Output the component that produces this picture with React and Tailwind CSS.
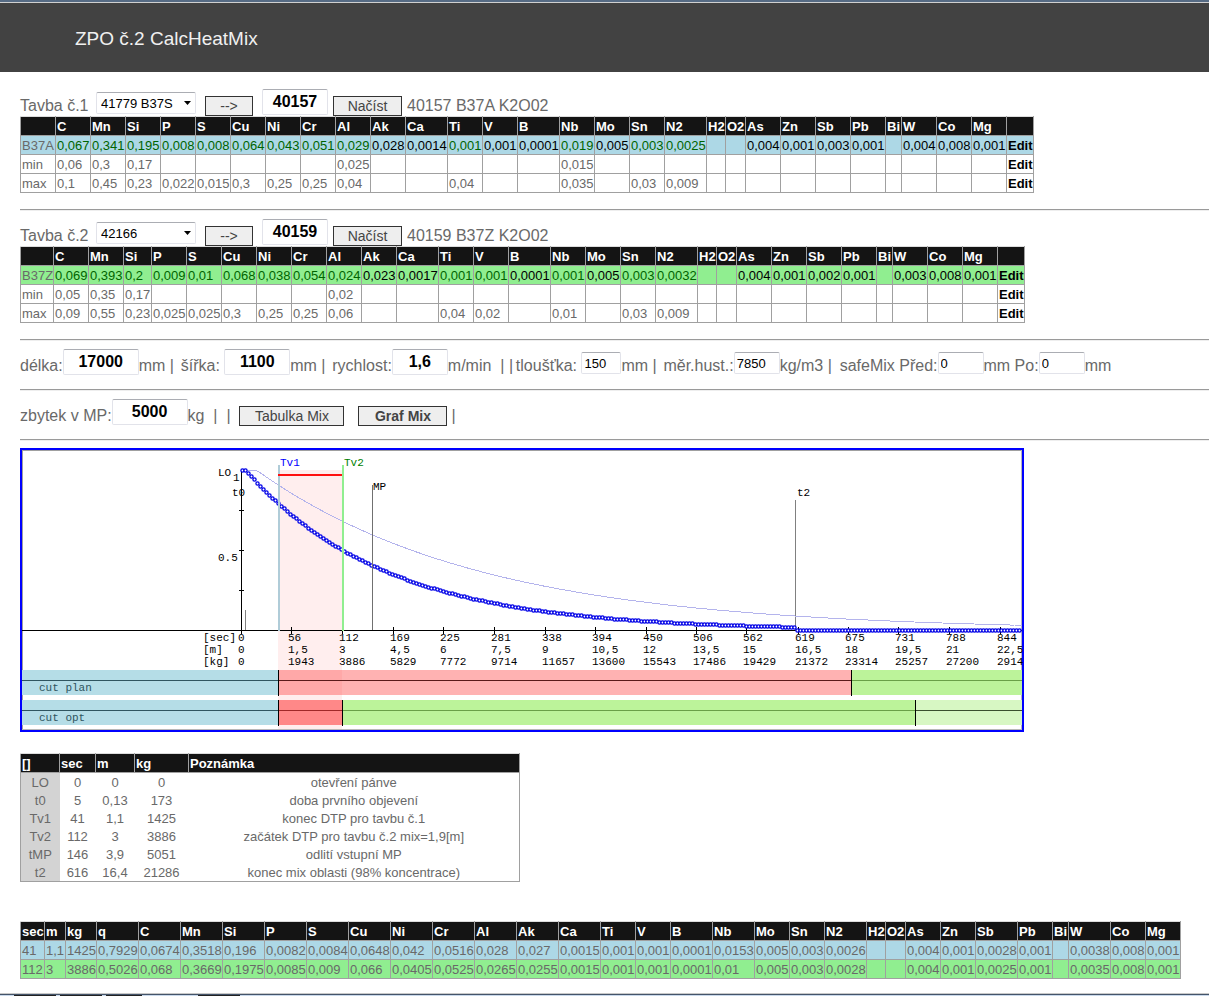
import { useState } from 'react';

const S = 'w-[35px]';
const L = 'w-[42px]';

const ELEMENTS = [
  'C', 'Mn', 'Si', 'P', 'S', 'Cu', 'Ni', 'Cr', 'Al', 'Ak', 'Ca', 'Ti', 'V', 'B', 'Nb', 'Mo',
  'Sn', 'N2', 'H2', 'O2', 'As', 'Zn', 'Sb', 'Pb', 'Bi', 'W', 'Co', 'Mg',
];

const HEATS = [
  {
    id: 1,
    selected: '41779 B37S',
    number: '40157',
    title: '40157 B37A K2O02',
    grade: 'B37A',
    rowColor: 'bg-[#add8e6]',
    columns: [
      'w-[35px]', S, S, S, S, S, S, S, S, S, S, L, S, S, L, S, S, S, L,
      'w-[19px]', 'w-[20px]', S, S, S, S, 'w-[16px]', S, S, S, 'w-[27px]',
    ],
    values: {
      C: '0,067', Mn: '0,341', Si: '0,195', P: '0,008', S: '0,008', Cu: '0,064', Ni: '0,043',
      Cr: '0,051', Al: '0,029', Ak: '0,028', Ca: '0,0014', Ti: '0,001', V: '0,001', B: '0,0001',
      Nb: '0,019', Mo: '0,005', Sn: '0,003', N2: '0,0025', As: '0,004', Zn: '0,001', Sb: '0,003',
      Pb: '0,001', W: '0,004', Co: '0,008', Mg: '0,001',
    },
    min: { C: '0,06', Mn: '0,3', Si: '0,17', Al: '0,025', Nb: '0,015' },
    max: {
      C: '0,1', Mn: '0,45', Si: '0,23', P: '0,022', S: '0,015', Cu: '0,3', Ni: '0,25', Cr: '0,25',
      Al: '0,04', Ti: '0,04', Nb: '0,035', Sn: '0,03', N2: '0,009',
    },
  },
  {
    id: 2,
    selected: '42166',
    number: '40159',
    title: '40159 B37Z K2O02',
    grade: 'B37Z',
    rowColor: 'bg-[#90ee90]',
    columns: [
      'w-[33px]', S, S, 'w-[28px]', S, S, S, S, S, S, S, L, S, S, L, S, S, S, L,
      'w-[19px]', 'w-[20px]', S, S, S, S, 'w-[16px]', S, S, S, 'w-[27px]',
    ],
    values: {
      C: '0,069', Mn: '0,393', Si: '0,2', P: '0,009', S: '0,01', Cu: '0,068', Ni: '0,038',
      Cr: '0,054', Al: '0,024', Ak: '0,023', Ca: '0,0017', Ti: '0,001', V: '0,001', B: '0,0001',
      Nb: '0,001', Mo: '0,005', Sn: '0,003', N2: '0,0032', As: '0,004', Zn: '0,001', Sb: '0,002',
      Pb: '0,001', W: '0,003', Co: '0,008', Mg: '0,001',
    },
    min: { C: '0,05', Mn: '0,35', Si: '0,17', Al: '0,02' },
    max: {
      C: '0,09', Mn: '0,55', Si: '0,23', P: '0,025', S: '0,025', Cu: '0,3', Ni: '0,25', Cr: '0,25',
      Al: '0,06', Ti: '0,04', V: '0,02', Nb: '0,01', Sn: '0,03', N2: '0,009',
    },
  },
];

const EVENTS = [
  ['LO', '0', '0', '0', 'otevření pánve'],
  ['t0', '5', '0,13', '173', 'doba prvního objevení'],
  ['Tv1', '41', '1,1', '1425', 'konec DTP pro tavbu č.1'],
  ['Tv2', '112', '3', '3886', 'začátek DTP pro tavbu č.2 mix=1,9[m]'],
  ['tMP', '146', '3,9', '5051', 'odlití vstupní MP'],
  ['t2', '616', '16,4', '21286', 'konec mix oblasti (98% koncentrace)'],
];

const MIX_COLUMNS = [
  'w-[24px]', 'w-[21px]', 'w-[31px]', L, L, L, L, L, L, L, L, L, L, L, L, S, S, L, L, S,
  S, L, 'w-[19px]', 'w-[20px]', S, S, L, S, 'w-[16px]', L, S, S,
];

const MIX_ROWS = [
  {
    color: 'bg-[#add8e6]',
    cells: [
      '41', '1,1', '1425', '0,7929', '0,0674', '0,3518', '0,196', '0,0082', '0,0084', '0,0648',
      '0,042', '0,0516', '0,028', '0,027', '0,0015', '0,001', '0,001', '0,0001', '0,0153', '0,005',
      '0,003', '0,0026', '', '', '0,004', '0,001', '0,0028', '0,001', '', '0,0038', '0,008', '0,001',
    ],
  },
  {
    color: 'bg-[#90ee90]',
    cells: [
      '112', '3', '3886', '0,5026', '0,068', '0,3669', '0,1975', '0,0085', '0,009', '0,066',
      '0,0405', '0,0525', '0,0265', '0,0255', '0,0015', '0,001', '0,001', '0,0001', '0,01', '0,005',
      '0,003', '0,0028', '', '', '0,004', '0,001', '0,0025', '0,001', '', '0,0035', '0,008', '0,001',
    ],
  },
];

// x, sec, m, kg
const TICKS = [
  [241, '0', '0', '0'],
  [291, '56', '1,5', '1943'],
  [342, '112', '3', '3886'],
  [393, '169', '4,5', '5829'],
  [443, '225', '6', '7772'],
  [494, '281', '7,5', '9714'],
  [545, '338', '9', '11657'],
  [595, '394', '10,5', '13600'],
  [646, '450', '12', '15543'],
  [696, '506', '13,5', '17486'],
  [746, '562', '15', '19429'],
  [798, '619', '16,5', '21372'],
  [848, '675', '18', '23314'],
  [898, '731', '19,5', '25257'],
  [949, '788', '21', '27200'],
  [1000, '844', '22,5', '2914'],
];

const AXIS_Y = 630.5;
const decay = (x, start, tau) => (x <= start ? 1 : Math.exp(-(x - start) / tau));

const mixPoints = [];
for (let x = 242.5; x < 1021; x += 3) {
  const y = x < 797 ? AXIS_Y - 160 * decay(x, 246, 139.9) : AXIS_Y;
  mixPoints.push([x, Math.floor(y) + 0.5]);
}

const lightPoints = [];
for (let x = 242; x <= 1022; x += 4) {
  lightPoints.push(`${x},${(AXIS_Y - 160 * decay(x, 257, 224)).toFixed(1)}`);
}

const Divider = ({ className }) => (
  <hr className={`h-[2px] border-0 border-t border-b border-t-[#9a9a9a] border-b-[#eeeeee] ${className}`} />
);

const Button = ({ children, className, ...rest }) => (
  <button
    type="button"
    className={`mt-[7px] h-5 shrink-0 border border-[#333] bg-[#eeeeee] text-center text-[14px] leading-[18px] text-[#444] ${className}`}
    {...rest}
  >
    {children}
  </button>
);

const BigInput = ({ id, value, className, ...rest }) => {
  const [text, setText] = useState(value);
  return (
    <input
      id={id}
      type="text"
      value={text}
      onChange={(e) => setText(e.target.value)}
      className={`h-[26px] shrink-0 rounded-[2px] border border-[#e2e3ea] border-t-[#abadb3] bg-white text-center text-[16px] font-bold text-black ${className}`}
      {...rest}
    />
  );
};

const SmallInput = ({ id, value, className }) => {
  const [text, setText] = useState(value);
  return (
    <input
      id={id}
      type="text"
      value={text}
      onChange={(e) => setText(e.target.value)}
      className={`mt-[3px] h-[22px] shrink-0 rounded-[2px] border border-[#e2e3ea] border-t-[#abadb3] bg-white px-[2px] text-[13px] text-black ${className}`}
    />
  );
};

const Label = ({ children, htmlFor }) => (
  <label htmlFor={htmlFor} className="mt-[7px] shrink-0 leading-5 whitespace-pre">{children}</label>
);

const Unit = ({ children, className = '' }) => (
  <span className={`mt-[7px] shrink-0 leading-5 whitespace-pre ${className}`}>{children}</span>
);

const Columns = ({ widths }) => (
  <colgroup>
    {widths.map((width, i) => (
      <col key={i} className={width} />
    ))}
  </colgroup>
);

const HeadCell = ({ children }) => (
  <th className="border border-[#a0a0a0] border-t-[#dddddd] bg-[#141414] px-px pt-[2px] text-left font-bold text-white">
    {children}
  </th>
);

const Cell = ({ children, className = '' }) => (
  <td className={`h-[19px] border border-[#a0a0a0] px-px pt-[2px] ${className}`}>{children}</td>
);

const EditCell = () => (
  <Cell className="font-bold text-black">
    <a href="#edit">Edit</a>
  </Cell>
);

const HeatSection = ({ heat }) => {
  const valueColor = (name) => (heat.min[name] || heat.max[name] ? 'text-[#006400]' : 'text-black');

  return (
    <section>
      <div className="flex h-[27px] items-start">
        <div className="w-[76px] shrink-0 pt-[7px] leading-5">
          <label htmlFor={`heat-${heat.id}`}>Tavba č.{heat.id}</label>
        </div>
        <div className="relative mt-[3px] w-[100px] shrink-0">
          <select
            id={`heat-${heat.id}`}
            className="block h-[22px] w-full appearance-none rounded-[2px] border border-[#e2e3ea] border-t-[#abadb3] bg-white pt-px pl-1 text-[13px] text-black"
          >
            <option>{heat.selected}</option>
          </select>
          <svg className="pointer-events-none absolute top-[9px] right-[5px]" width="7" height="4" viewBox="0 0 7 4">
            <path d="M0 0h7L3.5 4z" fill="#000" />
          </svg>
        </div>
        <Button className="ml-[9px] w-12">--&gt;</Button>
        <BigInput value={heat.number} aria-label={`Číslo tavby ${heat.id}`} className="ml-[9px] w-[66px]" />
        <Button className="ml-[5px] w-[69px]">Načíst</Button>
        <span className="ml-[5px] pt-[7px] leading-5">{heat.title}</span>
      </div>

      <table className="w-px table-fixed border-collapse text-[13px] leading-4 whitespace-nowrap">
        <Columns widths={heat.columns} />
        <thead>
          <tr className="h-[19px]">
            <HeadCell />
            {ELEMENTS.map((name) => (
              <HeadCell key={name}>{name}</HeadCell>
            ))}
            <HeadCell />
          </tr>
        </thead>
        <tbody>
          <tr className={heat.rowColor}>
            <Cell>{heat.grade}</Cell>
            {ELEMENTS.map((name) => (
              <Cell key={name} className={valueColor(name)}>{heat.values[name]}</Cell>
            ))}
            <EditCell />
          </tr>
          {['min', 'max'].map((limit) => (
            <tr key={limit}>
              <Cell>{limit}</Cell>
              {ELEMENTS.map((name) => (
                <Cell key={name}>{heat[limit][name]}</Cell>
              ))}
              <EditCell />
            </tr>
          ))}
        </tbody>
      </table>
    </section>
  );
};

const MixChart = () => (
  <div className="mt-[7px] w-[1004px] border-2 border-[#0000ff]">
    <svg
      viewBox="22 450 1000 280"
      className="block h-auto w-full overflow-visible font-['Liberation_Mono',monospace] text-[11px]"
      shapeRendering="crispEdges"
    >
      <path d="M22.5 729V450.5H1022" fill="none" stroke="#a0a0a0" />
      <path d="M22 729.5H1021.5V450" fill="none" stroke="#b8b8b8" />

      {/* mixed zone */}
      <rect x="278" y="470" width="64" height="259" fill="#ffeeee" />

      {/* cut plan */}
      <rect x="22" y="670" width="256" height="25" fill="#b5dde7" />
      <rect x="278" y="670" width="64" height="25" fill="#ffa8a8" />
      <rect x="342" y="670" width="509" height="25" fill="#ffb2b2" />
      <rect x="851" y="670" width="171" height="25" fill="#bcf39a" />
      <path d="M22 680.5H278" stroke="#2f5560" />
      <path d="M278 680.5H851" stroke="#5a1a1a" />
      <path d="M851 680.5H1022" stroke="#69a047" />
      <path d="M278.5 670V696M851.5 670V696" stroke="#000" />

      {/* cut opt */}
      <rect x="22" y="700" width="256" height="25" fill="#b5dde7" />
      <rect x="278" y="700" width="64" height="25" fill="#ff8888" />
      <rect x="342" y="700" width="573" height="25" fill="#bcf39a" />
      <rect x="915" y="700" width="107" height="25" fill="#d7f7c3" />
      <path d="M22 710.5H278" stroke="#2f5560" />
      <path d="M278 710.5H342" stroke="#a02828" />
      <path d="M342 710.5H915" stroke="#69a047" />
      <path d="M915 710.5H1022" stroke="#3a4f2e" />
      <path d="M278.5 700V726M342.5 700V726M915.5 700V726" stroke="#000" />

      {/* axes */}
      <path d={`M22 ${AXIS_Y}H1022M241.5 470V634M239 510.5H244M239 550.5H244M239 590.5H244`} stroke="#000" />
      {TICKS.map(([x]) => (
        <path key={x} d={`M${x + 0.5} 627V634`} stroke="#000" />
      ))}
      <path d="M245.5 610V630M795.5 500V630" stroke="#808080" />

      {/* concentration curves */}
      <polyline points={lightPoints.join(' ')} fill="none" stroke="#b4b4ec" />
      <g fill="#fff" stroke="#0000e6" strokeWidth="1.3" shapeRendering="auto">
        {mixPoints.map(([x, y]) => (
          <circle key={x} cx={x} cy={y} r="1.6" />
        ))}
      </g>

      <path d="M372.5 485V630" stroke="#707070" />
      <path d="M279 465V631" stroke="#b0ccd8" strokeWidth="2" />
      <path d="M278 475H343" stroke="#ff1010" strokeWidth="2" />
      <path d="M343 465V631" stroke="#90ee90" strokeWidth="2" />

      <text x="280" y="466" fill="#0000ff">Tv1</text>
      <text x="344" y="466" fill="#008000">Tv2</text>
      <text x="373" y="490">MP</text>
      <text x="797" y="496">t2</text>
      <text x="218" y="476">LO</text>
      <text x="233" y="481">1</text>
      <text x="232" y="496">t0</text>
      <text x="218" y="561">0.5</text>
      <text x="203" y="641">[sec]</text>
      <text x="203" y="653">[m]</text>
      <text x="203" y="665">[kg]</text>
      {TICKS.map(([x, sec, m, kg]) => (
        <g key={x}>
          <text x={x - 3} y="641">{sec}</text>
          <text x={x - 3} y="653">{m}</text>
          <text x={x - 3} y="665">{kg}</text>
        </g>
      ))}
      <text x="39" y="691" fill="#2f5560">cut plan</text>
      <text x="39" y="721" fill="#2f5560">cut opt</text>
    </svg>
  </div>
);

const EventTable = () => (
  <table className="mt-[21px] w-px table-fixed border-collapse border border-[#a0a0a0] text-[13px] leading-4 whitespace-nowrap">
    <Columns widths={['w-[39px]', 'w-[36px]', 'w-[39px]', 'w-[54px]', 'w-[331px]']} />
    <thead>
      <tr className="h-[19px]">
        {['[]', 'sec', 'm', 'kg', 'Poznámka'].map((name) => (
          <HeadCell key={name}>{name}</HeadCell>
        ))}
      </tr>
    </thead>
    <tbody>
      {EVENTS.map(([name, ...cells]) => (
        <tr key={name} className="h-[18px] text-center">
          <td className="bg-[#d3d3d3] pt-[2px]">{name}</td>
          {cells.map((cell, i) => (
            <td key={i} className="pt-[2px]">{cell}</td>
          ))}
        </tr>
      ))}
    </tbody>
  </table>
);

const MixTable = () => (
  <table className="mt-[39px] w-px table-fixed border-collapse text-[13px] leading-4 whitespace-nowrap">
    <Columns widths={MIX_COLUMNS} />
    <thead>
      <tr className="h-[19px]">
        {['sec', 'm', 'kg', 'q', ...ELEMENTS].map((name) => (
          <HeadCell key={name}>{name}</HeadCell>
        ))}
      </tr>
    </thead>
    <tbody>
      {MIX_ROWS.map((row) => (
        <tr key={row.cells[0]} className={row.color}>
          {row.cells.map((cell, i) => (
            <Cell key={i}>{cell}</Cell>
          ))}
        </tr>
      ))}
    </tbody>
  </table>
);

export default function App() {
  return (
    <div className="overflow-x-hidden bg-white font-['Liberation_Sans',Arial,sans-serif] text-[16px] text-[#696969]">
      <header className="border-t-2 border-[#566b84]">
        <div className="flex h-[70px] items-center border-t border-[#d0d0d0] bg-[#424242] pt-[2px] pl-[75px]">
          <h1 className="text-[19px] leading-6 text-[#f0f0f0]">ZPO č.2 CalcHeatMix</h1>
        </div>
      </header>

      <main className="pt-[17px] pl-5">
        <HeatSection heat={HEATS[0]} />
        <Divider className="mt-4 mb-2" />
        <HeatSection heat={HEATS[1]} />
        <Divider className="mt-4 mb-2" />

        <div className="flex h-[27px] items-start">
          <Label htmlFor="length">délka:</Label>
          <BigInput id="length" value="17000" className="w-[76px]" />
          <Unit className="w-[42px]">mm |</Unit>
          <Label htmlFor="width">{'šířka: '}</Label>
          <BigInput id="width" value="1100" className="w-[66px]" />
          <Unit className="w-[42px]">mm |</Unit>
          <Label htmlFor="speed">rychlost:</Label>
          <BigInput id="speed" value="1,6" className="w-14" />
          <Unit className="w-[68px]">{'m/min  | |'}</Unit>
          <Label htmlFor="thickness">{'tloušťka: '}</Label>
          <SmallInput id="thickness" value="150" className="w-10" />
          <Unit className="w-[42px]">mm |</Unit>
          <Label htmlFor="density">měr.hust.:</Label>
          <SmallInput id="density" value="7850" className="w-[46px]" />
          <Unit className="w-[60px]">kg/m3 |</Unit>
          <Label htmlFor="safe-before">safeMix Před:</Label>
          <SmallInput id="safe-before" value="0" className="w-[46px]" />
          <Unit>{'mm '}</Unit>
          <Label htmlFor="safe-after">Po:</Label>
          <SmallInput id="safe-after" value="0" className="w-[46px]" />
          <Unit>mm</Unit>
        </div>
        <Divider className="mt-[13px] mb-2" />

        <div className="flex h-[27px] items-start">
          <Label htmlFor="rest">zbytek v MP:</Label>
          <BigInput id="rest" value="5000" className="w-[76px]" />
          <Unit>{'kg  |  |  '}</Unit>
          <Button className="w-[105px]">Tabulka Mix</Button>
          <Button className="mr-1 ml-[14px] w-[89px] font-bold">Graf Mix</Button>
          <Unit>|</Unit>
        </div>
        <Divider className="mt-[13px]" />

        <MixChart />
        <EventTable />
        <MixTable />
      </main>

      <footer className="mt-[14px] border-t border-[#c8c8c8]">
        <div className="flex h-[2px] gap-1 border-t border-[#44546a] bg-[#c9d8ea] pl-[14px]">
          <span className="w-[42px] bg-[#222]" />
          <span className="w-[42px] bg-[#222]" />
          <span className="w-9 bg-[#222]" />
          <span className="ml-[52px] w-[42px] bg-[#222]" />
        </div>
      </footer>
    </div>
  );
}
